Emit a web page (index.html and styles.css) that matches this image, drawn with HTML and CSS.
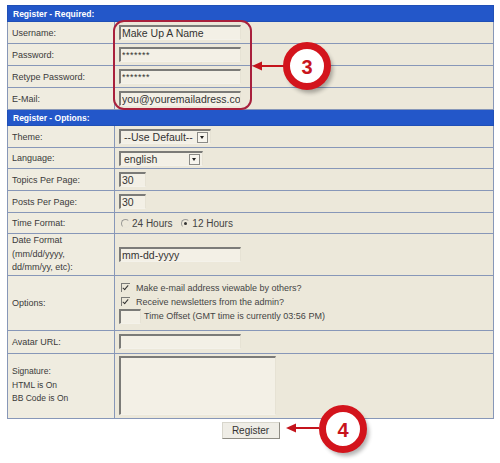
FILE: index.html
```html
<!DOCTYPE html>
<html lang="en">
<head>
    <meta charset="UTF-8">
    <title>Register</title>
    <link rel="stylesheet" href="styles.css">
</head>
<body>
    <div class="page">
        <table class="reg-form">
            <tr class="cat"><th colspan="2">Register - Required:</th></tr>
            <tr>
                <td class="label">Username:</td>
                <td><input class="field wide" type="text" value="Make Up A Name"></td>
            </tr>
            <tr>
                <td class="label">Password:</td>
                <td><input class="field wide stars" type="text" value="*******"></td>
            </tr>
            <tr>
                <td class="label">Retype Password:</td>
                <td><input class="field wide stars" type="text" value="*******"></td>
            </tr>
            <tr>
                <td class="label">E-Mail:</td>
                <td><input class="field wide" type="text" value="you@youremailadress.co"></td>
            </tr>

            <tr class="cat"><th colspan="2">Register - Options:</th></tr>
            <tr>
                <td class="label">Theme:</td>
                <td><div class="select theme">--Use Default--<span class="select-btn"></span></div></td>
            </tr>
            <tr class="r21">
                <td class="label">Language:</td>
                <td><div class="select lang">english<span class="select-btn"></span></div></td>
            </tr>
            <tr>
                <td class="label">Topics Per Page:</td>
                <td><input class="field tiny" type="text" value="30"></td>
            </tr>
            <tr>
                <td class="label">Posts Per Page:</td>
                <td><input class="field tiny" type="text" value="30"></td>
            </tr>
            <tr class="r21">
                <td class="label">Time Format:</td>
                <td>
                    <div class="radios">
                        <span class="radio"></span>24 Hours
                        <span class="radio on"></span>12 Hours
                    </div>
                </td>
            </tr>
            <tr class="date">
                <td class="label lines">Date Format<br>(mm/dd/yyyy,<br>dd/mm/yy, etc):</td>
                <td><input class="field wide" type="text" value="mm-dd-yyyy"></td>
            </tr>
            <tr class="opts">
                <td class="label">Options:</td>
                <td>
                    <div class="opt"><span class="check"></span>Make e-mail address viewable by others?</div>
                    <div class="opt"><span class="check"></span>Receive newsletters from the admin?</div>
                    <div class="opt offset"><span class="field blank"></span>Time Offset (GMT time is currently 03:56 PM)</div>
                </td>
            </tr>
            <tr class="avatar">
                <td class="label">Avatar URL:</td>
                <td><input class="field wide" type="text" value=""></td>
            </tr>
            <tr class="sig">
                <td class="label small lines">Signature:<br>HTML is On<br>BB Code is On</td>
                <td><textarea class="field sig-box"></textarea></td>
            </tr>
        </table>

        <div class="submit-row">
            <button class="btn" type="button">Register</button>
        </div>

        <!-- callouts drawn over the form -->
        <svg class="callouts" width="500" height="463" viewBox="0 0 500 463">
            <defs>
                <filter id="soft" x="-30%" y="-30%" width="160%" height="160%">
                    <feGaussianBlur stdDeviation="2"/>
                </filter>
            </defs>
            <rect x="114" y="21" width="137" height="88" rx="10" fill="none" stroke="#a8203c" stroke-width="2"/>

            <line x1="284" y1="66" x2="260" y2="66" stroke="#c4141c" stroke-width="2"/>
            <polygon points="252,66 262,61.5 262,70.5" fill="#c4141c"/>
            <circle cx="310" cy="70" r="23" fill="#000" opacity="0.3" filter="url(#soft)"/>
            <circle cx="307" cy="66" r="20.5" fill="#fff" stroke="#d3141c" stroke-width="7"/>
            <text x="307" y="73.5" class="num">3</text>

            <line x1="319" y1="428" x2="295" y2="428" stroke="#c4141c" stroke-width="2"/>
            <polygon points="286,428 296,423.5 296,432.5" fill="#c4141c"/>
            <circle cx="346" cy="433" r="23" fill="#000" opacity="0.3" filter="url(#soft)"/>
            <circle cx="343" cy="429" r="20.5" fill="#fff" stroke="#d3141c" stroke-width="7"/>
            <text x="343" y="436.5" class="num">4</text>
        </svg>
    </div>
</body>
</html>
```

FILE: styles.css
```css
body {
    margin: 0;
    background: #fff;
    font-family: "Liberation Sans", Arial, sans-serif;
}

.page {
    position: relative;
    width: 500px;
    height: 463px;
    padding: 5px 0 0 7px;
    box-sizing: border-box;
}

/* form table */
.reg-form {
    border-collapse: collapse;
    width: 487px;
    background: #ece8da;
    border: 1px solid #7d8cab;
}

.reg-form tr {
    height: 22px;
}

.reg-form td {
    border: 1px solid #8797b8;
    padding: 0 0 0 4px;
    font-size: 9px;
    color: #3a3a3a;
    vertical-align: middle;
}

.reg-form td.label {
    width: 102px;
    background: #efece0;
}

.reg-form td.lines {
    line-height: 13.5px;
}

.reg-form td.small {
    font-size: 8.5px;
}

.reg-form tr.cat {
    height: 16px;
}

.cat th {
    background: #2357c9;
    color: #fff;
    font-size: 8.5px;
    font-weight: bold;
    text-align: left;
    padding: 0 5px;
    border: 1px solid #1f4fb6;
}

.reg-form tr.r21 { height: 21px; }
.reg-form tr.date { height: 41px; }
.reg-form tr.opts { height: 55px; }
.reg-form tr.avatar { height: 23px; }
.reg-form tr.sig { height: 65px; }

/* text boxes */
.field {
    display: block;
    box-sizing: border-box;
    height: 15px;
    margin: 0;
    padding: 0 0 0 1px;
    border-top: 2px solid #7b7b78;
    border-left: 2px solid #7b7b78;
    border-right: 1px solid #e6e2d4;
    border-bottom: 1px solid #f4f2ea;
    background: #f3f0e6;
    font-family: "Liberation Sans", Arial, sans-serif;
    font-size: 10.5px;
    color: #333;
    outline: none;
}

.field.wide {
    width: 122px;
}

.field.tiny {
    width: 27px;
}

.field.stars {
    font-size: 9px;
    letter-spacing: 0.5px;
}

.field.blank {
    display: inline-block;
    width: 22px;
    height: 15px;
    vertical-align: middle;
    margin-right: 3px;
}

.sig-box {
    width: 157px;
    height: 59px;
    resize: none;
}

/* drop-downs */
.select {
    position: relative;
    box-sizing: border-box;
    height: 15px;
    padding: 0 0 0 3px;
    border-top: 2px solid #7b7b78;
    border-left: 2px solid #7b7b78;
    border-right: 1px solid #e6e2d4;
    border-bottom: 1px solid #f4f2ea;
    background: #f3f0e6;
    font-size: 10.5px;
    line-height: 12px;
    color: #333;
}

.select.theme {
    width: 92px;
}

.select.lang {
    width: 84px;
}

.select-btn {
    position: absolute;
    right: 2px;
    top: 1px;
    width: 9px;
    height: 9px;
    border: 1px solid #8a8a86;
    background: #f7f5ee;
}

.select-btn::after {
    content: "";
    position: absolute;
    left: 2px;
    top: 3px;
    border-left: 2.5px solid transparent;
    border-right: 2.5px solid transparent;
    border-top: 3px solid #222;
}

/* radio buttons */
.radios {
    font-size: 10px;
    color: #444;
    padding-left: 2px;
}

.radio {
    display: inline-block;
    position: relative;
    width: 7px;
    height: 7px;
    margin-right: 2px;
    border-radius: 50%;
    border: 1px solid #9a9a96;
    border-right-color: #e8e5da;
    border-bottom-color: #e8e5da;
    vertical-align: -1px;
}

.radio.on {
    margin-left: 6px;
}

.radio.on::after {
    content: "";
    position: absolute;
    left: 2px;
    top: 2px;
    width: 3px;
    height: 3px;
    border-radius: 50%;
    background: #333;
}

/* option checkboxes */
.opt {
    font-size: 9px;
    color: #444;
    line-height: 14px;
    padding-left: 2px;
}

.opt.offset {
    padding-left: 0;
    line-height: 15px;
}

.check {
    display: inline-block;
    position: relative;
    width: 8px;
    height: 8px;
    margin-right: 6px;
    border-top: 1px solid #7b7b78;
    border-left: 1px solid #7b7b78;
    vertical-align: -1px;
}

.check::after {
    content: "";
    position: absolute;
    left: 2px;
    top: 0;
    width: 2px;
    height: 5px;
    border-right: 1.5px solid #333;
    border-bottom: 1.5px solid #333;
    transform: rotate(40deg);
}

/* submit */
.submit-row {
    width: 487px;
    text-align: center;
    padding-top: 1px;
}

.btn {
    width: 58px;
    height: 17px;
    padding: 0;
    font-family: "Liberation Sans", Arial, sans-serif;
    font-size: 10px;
    color: #333;
    background: #efede6;
    border: 1px solid #d8d6cc;
    border-right-color: #8e8c84;
    border-bottom-color: #8e8c84;
}

/* callout layer */
.callouts {
    position: absolute;
    top: 0;
    left: 0;
    pointer-events: none;
}

.callouts .num {
    font-family: "Liberation Sans", Arial, sans-serif;
    font-size: 20px;
    font-weight: bold;
    fill: #c8141c;
    text-anchor: middle;
}
```
